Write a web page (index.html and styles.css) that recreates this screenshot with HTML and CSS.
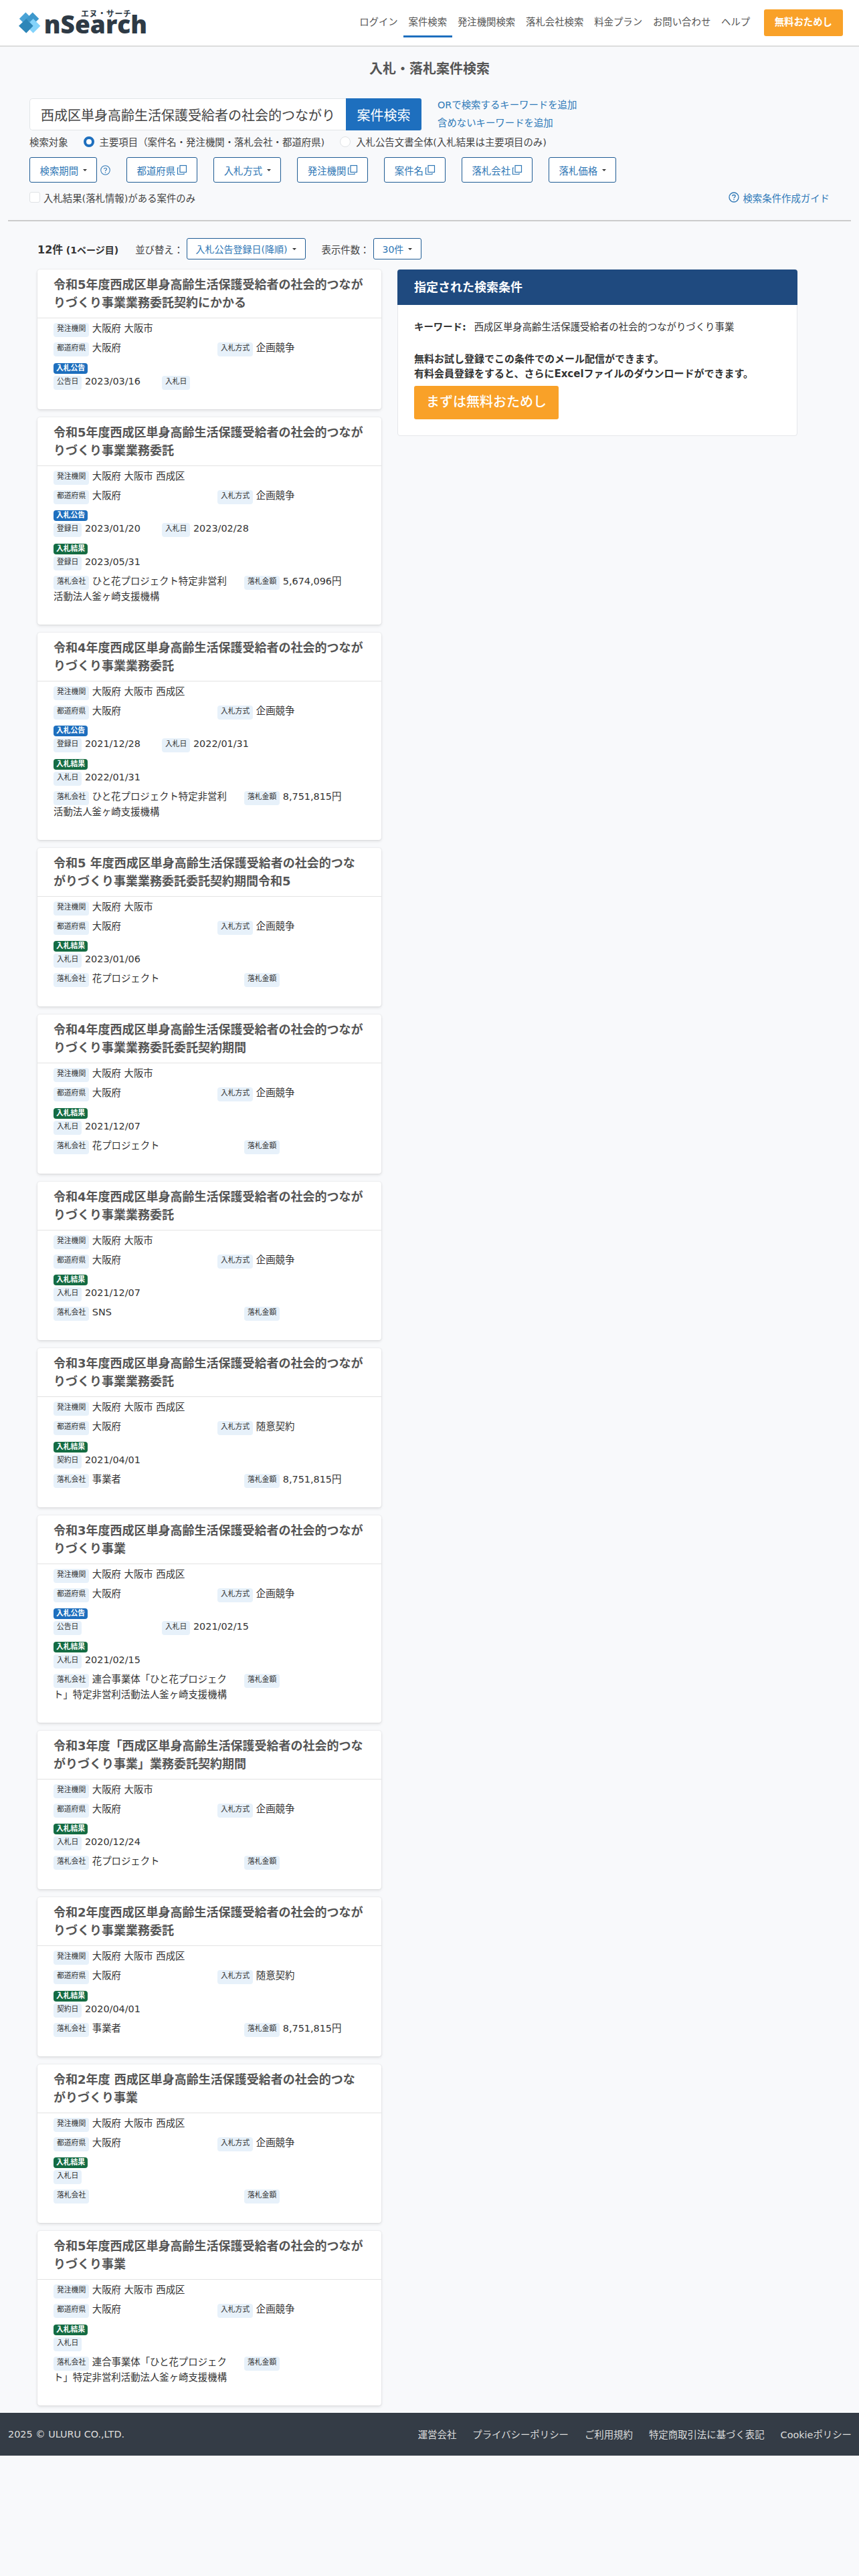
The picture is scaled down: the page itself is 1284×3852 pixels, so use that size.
FILE: index.html
```html
<!DOCTYPE html>
<html lang="ja">
<head>
    <meta charset="UTF-8">
    <meta name="viewport" content="width=device-width, initial-scale=1.0">
    <title>入札・落札案件検索 | nSearch</title>
    <link rel="stylesheet" href="styles.css">
</head>
<body>
    <header class="site-header">
        <a class="logo" href="#">
            <svg class="logo-mark" viewBox="0 0 38 37" width="38" height="37">
                <path fill="#4aa3d6" d="M12 1 L23 12 L12 23 L1 12 Z"/>
                <path fill="#3e98cc" d="M24 1 L35 12 L24 23 L13 12 Z"/>
                <path fill="#84d3fb" d="M25 12 L37.5 24.5 L25 37 L12.5 24.5 Z"/>
                <path fill="#2d86b8" d="M13 12 L25 24.5 L13 37 L0 24.5 Z"/>
            </svg>
            <span class="logo-name">nSearch</span>
            <span class="logo-kana">エヌ・サーチ</span>
        </a>
        <nav class="main-nav">
            <a href="#">ログイン</a>
            <a href="#" class="active">案件検索</a>
            <a href="#">発注機関検索</a>
            <a href="#">落札会社検索</a>
            <a href="#">料金プラン</a>
            <a href="#">お問い合わせ</a>
            <a href="#">ヘルプ</a>
            <a href="#" class="nav-trial">無料おためし</a>
        </nav>
    </header>

    <h1 class="page-title">入札・落札案件検索</h1>

    <section class="search">
        <div class="search-row">
            <div class="search-group">
                <input class="search-input" type="text" value="西成区単身高齢生活保護受給者の社会的つながり">
                <button class="search-button" type="button">案件検索</button>
            </div>
            <div class="search-links">
                <a href="#">ORで検索するキーワードを追加</a>
                <a href="#">含めないキーワードを追加</a>
            </div>
        </div>

        <div class="target-row">
            <span class="target-label">検索対象</span>
            <label class="target"><input type="radio" name="target" checked>主要項目（案件名・発注機関・落札会社・都道府県)</label>
            <label class="target"><input type="radio" name="target">入札公告文書全体(入札結果は主要項目のみ)</label>
        </div>

        <div class="filter-row">
            <div class="filter-with-help">
                <button class="outline-btn" type="button">検索期間<i class="caret"></i></button>
                <svg class="help-icon" viewBox="0 0 16 16" width="15" height="15">
                    <circle cx="8" cy="8" r="7.2" fill="none" stroke="currentColor" stroke-width="1.1"/>
                    <path fill="none" stroke="currentColor" stroke-width="1.2" d="M5.8 6.2 C5.8 3.9 10.2 3.9 10.2 6.2 C10.2 7.8 8 7.6 8 9.6"/>
                    <circle cx="8" cy="11.6" r="0.8" fill="currentColor"/>
                </svg>
            </div>
            <button class="outline-btn" type="button">都道府県<svg class="copy-icon" viewBox="0 0 16 16" width="16" height="16"><rect x="5" y="1.5" width="9.5" height="10" fill="none" stroke="currentColor" stroke-width="1.2"/><path fill="none" stroke="currentColor" stroke-width="1.2" d="M3.2 5 H1.5 V14.5 H11 V13"/></svg></button>
            <button class="outline-btn" type="button">入札方式<i class="caret"></i></button>
            <button class="outline-btn" type="button">発注機関<svg class="copy-icon" viewBox="0 0 16 16" width="16" height="16"><rect x="5" y="1.5" width="9.5" height="10" fill="none" stroke="currentColor" stroke-width="1.2"/><path fill="none" stroke="currentColor" stroke-width="1.2" d="M3.2 5 H1.5 V14.5 H11 V13"/></svg></button>
            <button class="outline-btn" type="button">案件名<svg class="copy-icon" viewBox="0 0 16 16" width="16" height="16"><rect x="5" y="1.5" width="9.5" height="10" fill="none" stroke="currentColor" stroke-width="1.2"/><path fill="none" stroke="currentColor" stroke-width="1.2" d="M3.2 5 H1.5 V14.5 H11 V13"/></svg></button>
            <button class="outline-btn" type="button">落札会社<svg class="copy-icon" viewBox="0 0 16 16" width="16" height="16"><rect x="5" y="1.5" width="9.5" height="10" fill="none" stroke="currentColor" stroke-width="1.2"/><path fill="none" stroke="currentColor" stroke-width="1.2" d="M3.2 5 H1.5 V14.5 H11 V13"/></svg></button>
            <button class="outline-btn" type="button">落札価格<i class="caret"></i></button>
        </div>

        <div class="check-row">
            <label class="check"><input type="checkbox">入札結果(落札情報)がある案件のみ</label>
            <a class="guide-link" href="#">
                <svg class="guide-icon" viewBox="0 0 16 16" width="16" height="16">
                    <circle cx="8" cy="8" r="7" fill="none" stroke="currentColor" stroke-width="1.3"/>
                    <path fill="none" stroke="currentColor" stroke-width="1.3" d="M5.8 6.2 C5.8 3.9 10.2 3.9 10.2 6.2 C10.2 7.8 8 7.6 8 9.6"/>
                    <circle cx="8" cy="11.6" r="0.8" fill="currentColor"/>
                </svg>検索条件作成ガイド</a>
        </div>
    </section>

    <hr class="divider">

    <div class="result-bar">
        <p class="result-count"><b>12件</b> <small>(1ページ目)</small></p>
        <span class="bar-label sort-label">並び替え：</span>
        <button class="outline-btn small" type="button">入札公告登録日(降順)<i class="caret"></i></button>
        <span class="bar-label size-label">表示件数：</span>
        <button class="outline-btn small" type="button">30件<i class="caret"></i></button>
    </div>

    <main class="results">
        <div class="case-list">
            <article class="case">
                <h2 class="case-title">令和5年度西成区単身高齢生活保護受給者の社会的つながりづくり事業業務委託契約にかかる</h2>
                <div class="case-body">
                    <div class="row"><span class="tag">発注機関</span> 大阪府 大阪市</div>
                    <div class="row"><div class="half"><span class="tag">都道府県</span> 大阪府</div><div><span class="tag">入札方式</span> 企画競争</div></div>
                    <span class="chip notice">入札公告</span>
                    <div class="row"><div class="third"><span class="tag">公告日</span> 2023/03/16</div><div><span class="tag">入札日</span></div></div>
                </div>
            </article>

            <article class="case">
                <h2 class="case-title">令和5年度西成区単身高齢生活保護受給者の社会的つながりづくり事業業務委託</h2>
                <div class="case-body">
                    <div class="row"><span class="tag">発注機関</span> 大阪府 大阪市 西成区</div>
                    <div class="row"><div class="half"><span class="tag">都道府県</span> 大阪府</div><div><span class="tag">入札方式</span> 企画競争</div></div>
                    <span class="chip notice">入札公告</span>
                    <div class="row"><div class="third"><span class="tag">登録日</span> 2023/01/20</div><div><span class="tag">入札日</span> 2023/02/28</div></div>
                    <span class="chip result">入札結果</span>
                    <div class="row"><span class="tag">登録日</span> 2023/05/31</div>
                    <div class="row"><div class="company"><span class="tag">落札会社</span> ひと花プロジェクト特定非営利活動法人釜ヶ崎支援機構</div><div><span class="tag">落札金額</span> 5,674,096円</div></div>
                </div>
            </article>

            <article class="case">
                <h2 class="case-title">令和4年度西成区単身高齢生活保護受給者の社会的つながりづくり事業業務委託</h2>
                <div class="case-body">
                    <div class="row"><span class="tag">発注機関</span> 大阪府 大阪市 西成区</div>
                    <div class="row"><div class="half"><span class="tag">都道府県</span> 大阪府</div><div><span class="tag">入札方式</span> 企画競争</div></div>
                    <span class="chip notice">入札公告</span>
                    <div class="row"><div class="third"><span class="tag">登録日</span> 2021/12/28</div><div><span class="tag">入札日</span> 2022/01/31</div></div>
                    <span class="chip result">入札結果</span>
                    <div class="row"><span class="tag">入札日</span> 2022/01/31</div>
                    <div class="row"><div class="company"><span class="tag">落札会社</span> ひと花プロジェクト特定非営利活動法人釜ヶ崎支援機構</div><div><span class="tag">落札金額</span> 8,751,815円</div></div>
                </div>
            </article>

            <article class="case">
                <h2 class="case-title">令和5 年度西成区単身高齢生活保護受給者の社会的つながりづくり事業業務委託委託契約期間令和5</h2>
                <div class="case-body">
                    <div class="row"><span class="tag">発注機関</span> 大阪府 大阪市</div>
                    <div class="row"><div class="half"><span class="tag">都道府県</span> 大阪府</div><div><span class="tag">入札方式</span> 企画競争</div></div>
                    <span class="chip result">入札結果</span>
                    <div class="row"><span class="tag">入札日</span> 2023/01/06</div>
                    <div class="row"><div class="company"><span class="tag">落札会社</span> 花プロジェクト</div><div><span class="tag">落札金額</span></div></div>
                </div>
            </article>

            <article class="case">
                <h2 class="case-title">令和4年度西成区単身高齢生活保護受給者の社会的つながりづくり事業業務委託委託契約期間</h2>
                <div class="case-body">
                    <div class="row"><span class="tag">発注機関</span> 大阪府 大阪市</div>
                    <div class="row"><div class="half"><span class="tag">都道府県</span> 大阪府</div><div><span class="tag">入札方式</span> 企画競争</div></div>
                    <span class="chip result">入札結果</span>
                    <div class="row"><span class="tag">入札日</span> 2021/12/07</div>
                    <div class="row"><div class="company"><span class="tag">落札会社</span> 花プロジェクト</div><div><span class="tag">落札金額</span></div></div>
                </div>
            </article>

            <article class="case">
                <h2 class="case-title">令和4年度西成区単身高齢生活保護受給者の社会的つながりづくり事業業務委託</h2>
                <div class="case-body">
                    <div class="row"><span class="tag">発注機関</span> 大阪府 大阪市</div>
                    <div class="row"><div class="half"><span class="tag">都道府県</span> 大阪府</div><div><span class="tag">入札方式</span> 企画競争</div></div>
                    <span class="chip result">入札結果</span>
                    <div class="row"><span class="tag">入札日</span> 2021/12/07</div>
                    <div class="row"><div class="company"><span class="tag">落札会社</span> SNS</div><div><span class="tag">落札金額</span></div></div>
                </div>
            </article>

            <article class="case">
                <h2 class="case-title">令和3年度西成区単身高齢生活保護受給者の社会的つながりづくり事業業務委託</h2>
                <div class="case-body">
                    <div class="row"><span class="tag">発注機関</span> 大阪府 大阪市 西成区</div>
                    <div class="row"><div class="half"><span class="tag">都道府県</span> 大阪府</div><div><span class="tag">入札方式</span> 随意契約</div></div>
                    <span class="chip result">入札結果</span>
                    <div class="row"><span class="tag">契約日</span> 2021/04/01</div>
                    <div class="row"><div class="company"><span class="tag">落札会社</span> 事業者</div><div><span class="tag">落札金額</span> 8,751,815円</div></div>
                </div>
            </article>

            <article class="case">
                <h2 class="case-title">令和3年度西成区単身高齢生活保護受給者の社会的つながりづくり事業</h2>
                <div class="case-body">
                    <div class="row"><span class="tag">発注機関</span> 大阪府 大阪市 西成区</div>
                    <div class="row"><div class="half"><span class="tag">都道府県</span> 大阪府</div><div><span class="tag">入札方式</span> 企画競争</div></div>
                    <span class="chip notice">入札公告</span>
                    <div class="row"><div class="third"><span class="tag">公告日</span></div><div><span class="tag">入札日</span> 2021/02/15</div></div>
                    <span class="chip result">入札結果</span>
                    <div class="row"><span class="tag">入札日</span> 2021/02/15</div>
                    <div class="row"><div class="company"><span class="tag">落札会社</span> 連合事業体「ひと花プロジェクト」特定非営利活動法人釜ヶ崎支援機構</div><div><span class="tag">落札金額</span></div></div>
                </div>
            </article>

            <article class="case">
                <h2 class="case-title">令和3年度「西成区単身高齢生活保護受給者の社会的つながりづくり事業」業務委託契約期間</h2>
                <div class="case-body">
                    <div class="row"><span class="tag">発注機関</span> 大阪府 大阪市</div>
                    <div class="row"><div class="half"><span class="tag">都道府県</span> 大阪府</div><div><span class="tag">入札方式</span> 企画競争</div></div>
                    <span class="chip result">入札結果</span>
                    <div class="row"><span class="tag">入札日</span> 2020/12/24</div>
                    <div class="row"><div class="company"><span class="tag">落札会社</span> 花プロジェクト</div><div><span class="tag">落札金額</span></div></div>
                </div>
            </article>

            <article class="case">
                <h2 class="case-title">令和2年度西成区単身高齢生活保護受給者の社会的つながりづくり事業業務委託</h2>
                <div class="case-body">
                    <div class="row"><span class="tag">発注機関</span> 大阪府 大阪市 西成区</div>
                    <div class="row"><div class="half"><span class="tag">都道府県</span> 大阪府</div><div><span class="tag">入札方式</span> 随意契約</div></div>
                    <span class="chip result">入札結果</span>
                    <div class="row"><span class="tag">契約日</span> 2020/04/01</div>
                    <div class="row"><div class="company"><span class="tag">落札会社</span> 事業者</div><div><span class="tag">落札金額</span> 8,751,815円</div></div>
                </div>
            </article>

            <article class="case">
                <h2 class="case-title">令和2年度 西成区単身高齢生活保護受給者の社会的つながりづくり事業</h2>
                <div class="case-body">
                    <div class="row"><span class="tag">発注機関</span> 大阪府 大阪市 西成区</div>
                    <div class="row"><div class="half"><span class="tag">都道府県</span> 大阪府</div><div><span class="tag">入札方式</span> 企画競争</div></div>
                    <span class="chip result">入札結果</span>
                    <div class="row"><span class="tag">入札日</span></div>
                    <div class="row"><div class="company"><span class="tag">落札会社</span></div><div><span class="tag">落札金額</span></div></div>
                </div>
            </article>

            <article class="case">
                <h2 class="case-title">令和5年度西成区単身高齢生活保護受給者の社会的つながりづくり事業</h2>
                <div class="case-body">
                    <div class="row"><span class="tag">発注機関</span> 大阪府 大阪市 西成区</div>
                    <div class="row"><div class="half"><span class="tag">都道府県</span> 大阪府</div><div><span class="tag">入札方式</span> 企画競争</div></div>
                    <span class="chip result">入札結果</span>
                    <div class="row"><span class="tag">入札日</span></div>
                    <div class="row"><div class="company"><span class="tag">落札会社</span> 連合事業体「ひと花プロジェクト」特定非営利活動法人釜ヶ崎支援機構</div><div><span class="tag">落札金額</span></div></div>
                </div>
            </article>
        </div>

        <aside class="condition">
            <h2 class="condition-title">指定された検索条件</h2>
            <div class="condition-body">
                <p class="keyword"><b>キーワード:</b><span>西成区単身高齢生活保護受給者の社会的つながりづくり事業</span></p>
                <p class="notice-text">無料お試し登録でこの条件でのメール配信ができます。<br>有料会員登録をすると、さらにExcelファイルのダウンロードができます。</p>
                <a class="trial-button" href="#">まずは無料おためし</a>
            </div>
        </aside>
    </main>

    <footer class="site-footer">
        <span>2025 © ULURU CO.,LTD.</span>
        <nav class="footer-nav">
            <a href="#">運営会社</a>
            <a href="#">プライバシーポリシー</a>
            <a href="#">ご利用規約</a>
            <a href="#">特定商取引法に基づく表記</a>
            <a href="#">Cookieポリシー</a>
        </nav>
    </footer>
</body>
</html>
```

FILE: styles.css
```css
* {
    box-sizing: border-box;
}

body {
    margin: 0;
    background-color: #f8f9fb;
    color: #333;
    font-family: "DejaVu Sans", "Noto Sans CJK JP", sans-serif;
    font-size: 14.4px;
}

a {
    text-decoration: none;
}

/* header */
.site-header {
    display: flex;
    justify-content: space-between;
    height: 70px;
    padding: 0 24px 0 28px;
    background-color: white;
    border-bottom: 2px solid #ddd;
}

.logo {
    position: relative;
    display: flex;
    align-items: flex-start;
    width: 192px;
    padding-top: 15px;
}

.logo-name {
    margin: 3px 0 0 5px;
    color: #2e3a45;
    font-family: "Open Sans", sans-serif;
    font-size: 37px;
    font-weight: 800;
    line-height: 36px;
}

.logo-kana {
    position: absolute;
    top: 13px;
    left: 93px;
    color: #2e3a45;
    font-family: "Noto Sans CJK JP", sans-serif;
    font-size: 12px;
    font-weight: 700;
    letter-spacing: 0.6px;
    line-height: 14px;
}

.main-nav {
    display: flex;
    align-items: flex-start;
}

.main-nav a {
    height: 56px;
    padding: 23px 7.9px 0;
    color: #555;
    line-height: 21px;
    border-bottom: 3px solid transparent;
}

.main-nav a.active {
    border-bottom-color: #1e6fbe;
}

.main-nav a.nav-trial {
    height: 40px;
    margin: 14px 0 0 12.5px;
    padding: 9px 16px;
    color: white;
    font-weight: bold;
    background-color: #f9a128;
    border: none;
    border-radius: 3px;
}

.page-title {
    margin: 18px 0 0;
    color: #555;
    font-size: 20px;
    font-weight: bold;
    line-height: 30px;
    text-align: center;
}

/* search form */
.search {
    padding: 0 44px;
}

.search-row {
    display: flex;
    align-items: center;
    gap: 24px;
    margin-top: 26px;
}

.search-group {
    display: flex;
    width: 586px;
    height: 48px;
}

.search-input {
    flex: 1;
    min-width: 0;
    padding: 0 16px;
    color: #444;
    font-family: inherit;
    font-size: 20px;
    background-color: white;
    border: 1px solid #e2e5e8;
    border-right: none;
    border-radius: 5px 0 0 5px;
}

.search-button {
    width: 113px;
    padding: 0;
    color: white;
    font-family: inherit;
    font-size: 20px;
    background-color: #1e6fbe;
    border: none;
    border-radius: 0 3px 3px 0;
}

.search-links {
    display: flex;
    flex-direction: column;
    line-height: 27px;
}

.search-links a,
.guide-link {
    color: #2f7ab8;
}

.target-row {
    display: flex;
    align-items: center;
    height: 21px;
    margin-top: 3px;
    color: #444;
}

.target-label {
    margin-right: 23px;
}

.target {
    display: flex;
    align-items: center;
    gap: 8px;
    margin-right: 23px;
}

.target input,
.check input {
    appearance: none;
    width: 16px;
    height: 16px;
    margin: 0;
    background-color: white;
    border: 1px solid #dfe2e5;
}

.target input {
    border-radius: 50%;
}

.target input:checked {
    background-color: white;
    border: 4.5px solid #1e6fbe;
}

.check input {
    border-radius: 3px;
}

.filter-row {
    display: flex;
    gap: 24px;
    margin-top: 13px;
}

.filter-with-help {
    display: flex;
    align-items: center;
    gap: 5px;
}

.outline-btn {
    display: inline-flex;
    align-items: center;
    height: 38px;
    padding: 0 14px 0 14.5px;
    color: #2f77b5;
    font-family: inherit;
    font-size: 14.4px;
    background-color: white;
    border: 1px solid #1f5c94;
    border-radius: 3px;
}

.outline-btn.small {
    height: 32px;
    padding: 0 13px;
    font-size: 14px;
}

.caret {
    width: 0;
    height: 0;
    margin-left: 7px;
    border-top: 3px solid #333;
    border-right: 3px solid transparent;
    border-left: 3px solid transparent;
}

.copy-icon {
    margin-left: 2px;
}

.help-icon,
.guide-icon {
    color: #2f77b5;
}

.check-row {
    display: flex;
    align-items: center;
    justify-content: space-between;
    height: 20px;
    margin-top: 12px;
}

.check {
    display: flex;
    align-items: center;
    gap: 5px;
    color: #444;
}

.guide-link {
    display: flex;
    align-items: center;
    gap: 5px;
}

.divider {
    height: 2px;
    margin: 24px 12px 0;
    background-color: #ccc;
    border: none;
}

/* results */
.result-bar {
    display: flex;
    align-items: center;
    height: 32px;
    margin: 25px 0 0 56px;
}

.result-count {
    margin: 0;
}

.result-count b {
    font-size: 16px;
}

.result-count small {
    font-size: 14px;
    font-weight: bold;
}

.bar-label {
    color: #444;
}

.sort-label {
    margin: 0 4.5px 0 25px;
}

.size-label {
    margin: 0 5px 0 24px;
}

.results {
    display: flex;
    align-items: flex-start;
    gap: 24px;
    margin: 15px 0 11px 56px;
}

.case-list {
    display: flex;
    flex-direction: column;
    gap: 12px;
    width: 514px;
}

.case {
    padding-bottom: 24px;
    background-color: white;
    border-radius: 4px;
    box-shadow: 0 0 2px rgba(0, 0, 0, 0.12), 0 2px 4px rgba(0, 0, 0, 0.1);
}

.case-title {
    margin: 0;
    padding: 9px 24px;
    color: #555;
    font-size: 18px;
    font-weight: bold;
    line-height: 27px;
    border-bottom: 1px solid #e3e3e3;
}

.case-body {
    padding: 4px 24px 0;
}

.row {
    margin-bottom: 6px;
    line-height: 23px;
}

.row > div {
    display: inline-block;
    vertical-align: top;
}

.half {
    width: 245px;
}

.third {
    width: 162px;
}

.company {
    width: 261px;
    margin-right: 24px;
}

.tag {
    display: inline-block;
    vertical-align: top;
    height: 21px;
    margin: 3px 0 -1px;
    padding: 0 5px;
    color: #333;
    font-size: 10.8px;
    line-height: 18px;
    background-color: #e7f1fa;
    border-radius: 4px;
}

/* margin-top collapses with the row above */
.chip {
    display: block;
    width: 51px;
    height: 16px;
    margin-top: 10.5px;
    color: white;
    font-size: 10.8px;
    font-weight: bold;
    line-height: 16px;
    text-align: center;
    border-radius: 4px;
}

.chip.notice {
    background-color: #1e6fbe;
}

.chip.result {
    background-color: #146c43;
}

/* search condition panel */
.condition {
    width: 598px;
    background-color: white;
    border: 1px solid #e5e7ea;
    border-radius: 4px;
}

.condition-title {
    margin: -1px -1px 0;
    padding: 13px 25px;
    color: white;
    font-size: 18px;
    font-weight: bold;
    line-height: 27px;
    background-color: #1f4a7f;
    border-radius: 4px 4px 0 0;
}

.condition-body {
    padding: 22px 24px 24px;
}

.keyword {
    display: flex;
    gap: 12px;
    margin: 0;
    line-height: 22px;
}

.notice-text {
    margin: 26px 0 7px;
    font-size: 15px;
    font-weight: bold;
    line-height: 22px;
}

.trial-button {
    display: inline-block;
    height: 50px;
    padding: 0 18px;
    color: white;
    font-size: 20px;
    font-weight: 500;
    line-height: 48px;
    background-color: #f9a128;
    border-radius: 3px;
}

/* footer */
.site-footer {
    display: flex;
    align-items: center;
    justify-content: space-between;
    height: 64px;
    padding: 0 11px 0 12px;
    color: #ddd;
    background-color: #343c46;
}

.footer-nav {
    display: flex;
    gap: 24px;
}

.footer-nav a {
    color: #ddd;
}
```
